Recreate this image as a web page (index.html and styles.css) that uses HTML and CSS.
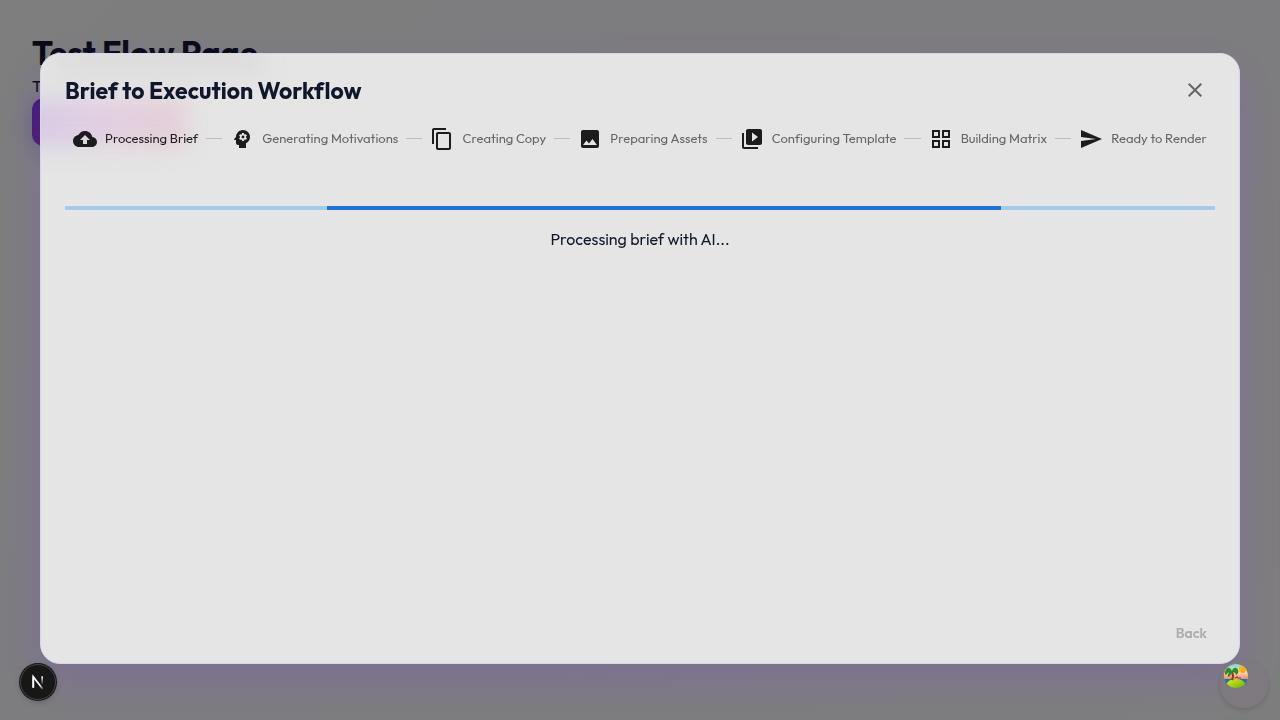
FILE: index.html
```
<!DOCTYPE html>
<html lang="en">
<head>
<meta charset="utf-8">
<title>Test Flow Page</title>
<meta name="viewport" content="width=device-width, initial-scale=1">
<link rel="stylesheet" href="styles.css">
</head>
<body>
<main class="page">
  <h1 class="page-title">Test Flow Page</h1>
  <p class="page-text">This page opens the workflow.</p>
  <button class="launch" type="button">Open Workflow</button>
</main>

<div class="backdrop">
  <section class="dialog" role="dialog" aria-modal="true" aria-labelledby="dialog-title">
    <header class="dialog-head">
      <h2 class="dialog-title" id="dialog-title">Brief to Execution Workflow</h2>
      <button class="close" type="button" aria-label="Close">
        <svg class="icon" viewBox="0 0 24 24"><path d="M19 6.41 17.59 5 12 10.59 6.41 5 5 6.41 10.59 12 5 17.59 6.41 19 12 13.41 17.59 19 19 17.59 13.41 12z"/></svg>
      </button>
    </header>

    <ol class="stepper">
      <li class="step active">
        <svg class="icon" viewBox="0 0 24 24"><path d="M19.35 10.04C18.67 6.59 15.64 4 12 4 9.11 4 6.6 5.64 5.35 8.04 2.34 8.36 0 10.91 0 14c0 3.31 2.69 6 6 6h13c2.76 0 5-2.24 5-5 0-2.64-2.05-4.78-4.65-4.96M14 13v4h-4v-4H7l5-5 5 5z"/></svg>
        <span>Processing Brief</span>
      </li>
      <li class="step">
        <svg class="icon" viewBox="0 0 24 24"><path d="M13 8.57c-.79 0-1.43.64-1.43 1.43s.64 1.43 1.43 1.43 1.43-.64 1.43-1.43-.64-1.43-1.43-1.43"/><path d="M13 3C9.25 3 6.2 5.94 6.02 9.64L4.1 12.2c-.25.33-.01.8.4.8H6v3c0 1.1.9 2 2 2h1v3h7v-4.68c2.36-1.12 4-3.53 4-6.32 0-3.87-3.13-7-7-7m3 7c0 .13-.01.26-.02.39l.83.66c.08.06.1.16.05.25l-.8 1.39c-.05.09-.16.12-.24.09l-.99-.4c-.21.16-.43.29-.67.39L14 13.83c-.01.1-.1.17-.2.17h-1.6c-.1 0-.18-.07-.2-.17l-.15-1.06c-.25-.1-.47-.23-.68-.39l-.99.4c-.09.03-.2 0-.25-.09l-.8-1.39c-.05-.08-.03-.19.05-.25l.84-.66c-.01-.13-.02-.26-.02-.39s.02-.27.04-.39l-.85-.66c-.08-.06-.1-.16-.05-.26l.8-1.38c.05-.09.15-.12.24-.09l1 .4c.2-.15.43-.29.67-.39L12 6.17c.02-.1.1-.17.2-.17h1.6c.1 0 .18.07.2.17l.15 1.06c.24.1.46.23.67.39l1-.4c.09-.03.2 0 .24.09l.8 1.38c.05.09.03.2-.05.26l-.85.66c.03.12.04.25.04.39"/></svg>
        <span>Generating Motivations</span>
      </li>
      <li class="step">
        <svg class="icon" viewBox="0 0 24 24"><path d="M16 1H4c-1.1 0-2 .9-2 2v14h2V3h12zm3 4H8c-1.1 0-2 .9-2 2v14c0 1.1.9 2 2 2h11c1.1 0 2-.9 2-2V7c0-1.1-.9-2-2-2m0 16H8V7h11z"/></svg>
        <span>Creating Copy</span>
      </li>
      <li class="step">
        <svg class="icon" viewBox="0 0 24 24"><path d="M21 19V5c0-1.1-.9-2-2-2H5c-1.1 0-2 .9-2 2v14c0 1.1.9 2 2 2h14c1.1 0 2-.9 2-2M8.500 13.500l2.500 3.010L14.500 12l4.500 6H5z"/></svg>
        <span>Preparing Assets</span>
      </li>
      <li class="step">
        <svg class="icon" viewBox="0 0 24 24"><path d="M4 6H2v14c0 1.100.9 2 2 2h14v-2H4zm16-4H8c-1.100 0-2 .9-2 2v12c0 1.100.9 2 2 2h12c1.100 0 2-.9 2-2V4c0-1.100-.9-2-2-2m-8 12.500v-9l6 4.500z"/></svg>
        <span>Configuring Template</span>
      </li>
      <li class="step">
        <svg class="icon" viewBox="0 0 24 24"><path fill-rule="evenodd" d="M3 3v8h8V3zm6 6H5V5h4zm-6 4v8h8v-8zm6 6H5v-4h4zm4-16v8h8V3zm6 6h-4V5h4zm-6 4v8h8v-8zm6 6h-4v-4h4z"/></svg>
        <span>Building Matrix</span>
      </li>
      <li class="step">
        <svg class="icon" viewBox="0 0 24 24"><path d="M2.010 21 23 12 2.010 3 2 10l15 2-15 2z"/></svg>
        <span>Ready to Render</span>
      </li>
    </ol>

    <div class="dialog-body">
      <div class="progress" role="progressbar" aria-label="Processing brief"><div class="progress-bar"></div></div>
      <p class="status">Processing brief with AI...</p>
    </div>

    <footer class="dialog-foot">
      <button class="back" type="button" disabled>Back</button>
    </footer>
  </section>
</div>

<button class="dev-badge" type="button" aria-label="Open developer tools">
  <svg viewBox="0 0 36 36">
    <defs>
      <linearGradient id="fade-a" x1="0" y1="0" x2="0" y2="1"><stop offset="0" stop-color="#fff"/><stop offset="1" stop-color="#fff" stop-opacity="0"/></linearGradient>
      <linearGradient id="fade-b" gradientUnits="userSpaceOnUse" x1="18" y1="18" x2="24" y2="25"><stop offset="0.400" stop-color="#fff"/><stop offset="1" stop-color="#fff" stop-opacity="0.200"/></linearGradient>
    </defs>
    <path d="M13 24V12.500L23 25.500" fill="none" stroke="url(#fade-b)" stroke-width="1.800"/>
    <path d="M13 24V12" stroke="#fff" stroke-width="1.800"/>
    <rect x="21.500" y="12" width="1.800" height="9" fill="url(#fade-a)"/>
  </svg>
</button>

<button class="query-badge" type="button" aria-label="Open query tools">
  <svg viewBox="0 0 24 24">
    <defs>
      <clipPath id="round"><circle cx="12" cy="12" r="12"/></clipPath>
      <linearGradient id="sky" x1="0" y1="0" x2="0" y2="1"><stop offset="0" stop-color="#78d8e4"/><stop offset="0.350" stop-color="#f6dfb0"/><stop offset="0.650" stop-color="#ff7a69"/></linearGradient>
      <linearGradient id="isle" x1="0" y1="0" x2="1" y2="1"><stop offset="0" stop-color="#e0ef20"/><stop offset="1" stop-color="#68a80b"/></linearGradient>
    </defs>
    <g clip-path="url(#round)">
      <rect width="24" height="24" fill="url(#sky)"/>
      <circle cx="19" cy="5" r="4" fill="#ffb20f"/>
      <rect y="15" width="24" height="9" fill="#087f9f"/>
      <ellipse cx="12" cy="20" rx="9" ry="5" fill="url(#isle)"/>
      <path d="M8 8Q10 12 8 16" fill="none" stroke="#8a421c" stroke-width="2"/>
      <path d="M8 7C6 3 3 3 2 6 0 8 1 11 2 11 3 9 5 8 8 8M8 7C9 3 13 3 14 6 15 8 14 10 12 11 12 9 10 8 8 8M7 7Q3 9 4 13 7 12 8 8" fill="#2b8c2c"/>
      <path d="M11 14l2-1 1 1 3 0" fill="none" stroke="#c02a55" stroke-width="1.200"/>
    </g>
  </svg>
</button>
</body>
</html>
```
FILE: styles.css
```
* {
  box-sizing: border-box;
}

body {
  margin: 0;
  min-height: 100vh;
  background: linear-gradient(135deg, #fafcfb 0%, #fbf9ff 35%, #fcfafc 100%);
  color: #0f172a;
  font-family: Outfit, Lato, sans-serif;
  font-size: 16px;
  line-height: 24px;
  font-variant-ligatures: none;
}

button {
  border: 0;
  padding: 0;
  background: none;
  font: inherit;
  color: inherit;
}

svg {
  display: block;
}

.page {
  display: flex;
  flex-direction: column;
  align-items: flex-start;
  padding: 32px;
}

.page-title {
  margin: 0;
  font-size: 33px;
  line-height: 42px;
  font-weight: 700;
}

.page-text {
  margin: 0;
}

.launch {
  padding: 12px 24px;
  border-radius: 12px;
  background: linear-gradient(135deg, #7c3aed, #ec4899);
  box-shadow: 0 4px 20px rgba(124, 58, 237, 0.3);
  color: #fff;
  font-weight: 600;
}

.backdrop {
  position: fixed;
  inset: 0;
  display: flex;
  justify-content: center;
  padding: 53px 40px 56px;
  background: rgba(0, 0, 0, 0.5);
}

.dialog {
  position: relative;
  z-index: 0;
  display: flex;
  flex-direction: column;
  width: 100%;
  max-width: 1200px;
  padding: 16px 24px;
  border: 1px solid #dbd6e6;
  border-radius: 20px;
  overflow: hidden;
  background: #e5e5e5;
  box-shadow: 0 16px 40px rgba(124, 58, 237, 0.2);
}

/* Soft tints of the page title and the launch button under frosted glass. */
.dialog::before,
.dialog::after {
  position: absolute;
  z-index: -1;
  filter: blur(12px);
  content: "";
}

.dialog::before {
  top: 45px;
  left: -30px;
  width: 175px;
  height: 48px;
  background: linear-gradient(90deg, #d4c9e6, #e2cfe0 60%, #e4ccd6);
}

.dialog::after {
  top: -8px;
  left: 12px;
  width: 210px;
  height: 26px;
  background: #dadadb;
}

.dialog-head {
  display: flex;
  align-items: center;
  justify-content: space-between;
}

.dialog-title {
  margin: 0;
  font-size: 23px;
  line-height: 33px;
  font-weight: 700;
}

.close {
  padding: 8px;
  color: #656565;
}

.icon {
  flex: none;
  width: 24px;
  height: 24px;
  fill: currentColor;
}

.stepper {
  display: flex;
  align-items: center;
  justify-content: space-between;
  margin: 0;
  padding: 16px 8px;
  list-style: none;
  color: #1c1c1c;
  font-size: 13px;
  line-height: 25px;
}

.step {
  display: flex;
  flex: auto;
  align-items: center;
  gap: 8px;
  white-space: nowrap;
}

.step:last-child {
  flex: none;
}

.step span {
  color: #666;
}

.step.active span {
  color: #1c1c1c;
}

.step:not(:last-child)::after {
  flex: auto;
  height: 1px;
  margin-right: 8px;
  background: #bdbdbd;
  content: "";
}

.dialog-body {
  flex: 1;
  padding-top: 39px;
}

.progress {
  height: 4px;
  background: #a6caed;
}

.progress-bar {
  width: 58.600%;
  height: 100%;
  margin-left: 22.800%;
  background: #1976d2;
}

.status {
  margin: 17px 0 0;
  text-align: center;
}

.dialog-foot {
  display: flex;
  justify-content: flex-end;
  padding-right: 8px;
}

.back {
  color: #adadad;
  font-size: 14px;
  line-height: 28px;
  font-weight: 600;
}

.dev-badge {
  position: fixed;
  bottom: 20px;
  left: 20px;
  width: 36px;
  height: 36px;
  border: 1px solid #444;
  border-radius: 50%;
  background: #171717;
  box-shadow: 0 0 0 1px #171717, 0 2px 6px rgba(0, 0, 0, 0.2);
}

.query-badge {
  position: fixed;
  right: 12px;
  bottom: 12px;
  display: flex;
  align-items: flex-start;
  width: 48px;
  height: 48px;
  padding: 4px;
  border-radius: 50%;
  background: linear-gradient(135deg, #b59a55 0%, #7e787f 22%);
  box-shadow: 0 2px 5px rgba(0, 0, 0, 0.15);
}

.query-badge svg {
  width: 24px;
  height: 24px;
}
```
